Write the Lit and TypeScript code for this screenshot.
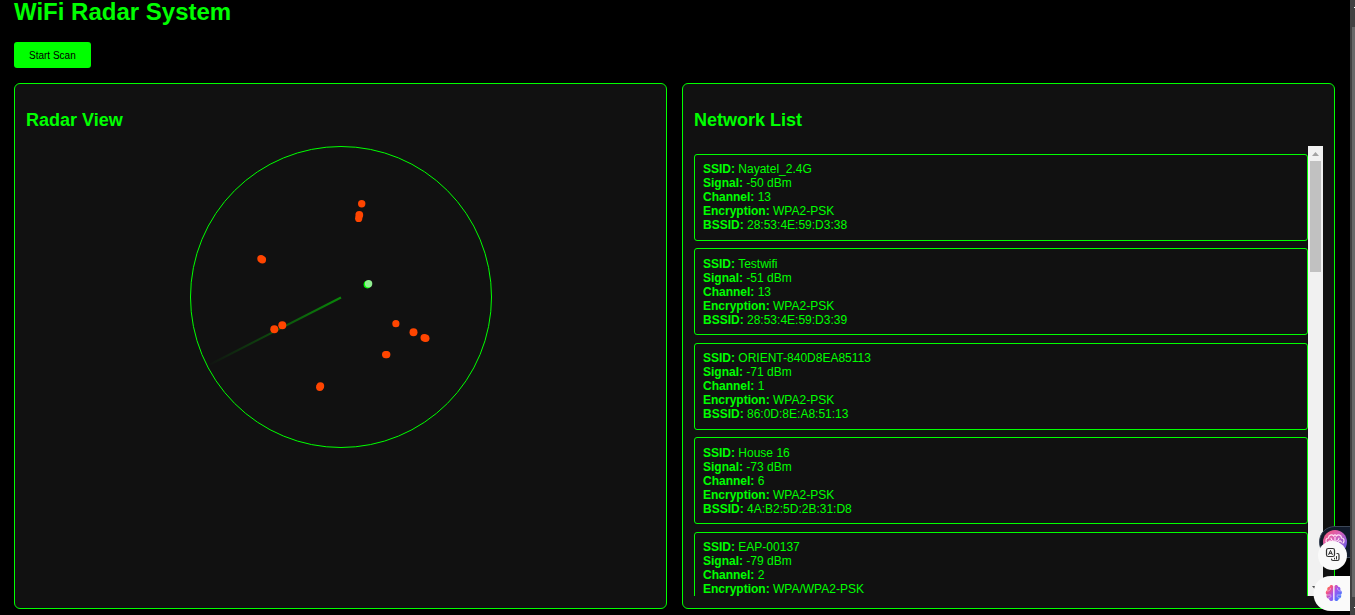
import { LitElement, html, svg, css } from "lit";
import { customElement } from "lit/decorators.js";

interface Network {
  ssid: string;
  signal: number;
  channel: number;
  encryption: string;
  bssid?: string;
}

const NETWORKS: Network[] = [
  { ssid: "Nayatel_2.4G", signal: -50, channel: 13, encryption: "WPA2-PSK", bssid: "28:53:4E:59:D3:38" },
  { ssid: "Testwifi", signal: -51, channel: 13, encryption: "WPA2-PSK", bssid: "28:53:4E:59:D3:39" },
  { ssid: "ORIENT-840D8EA85113", signal: -71, channel: 1, encryption: "WPA2-PSK", bssid: "86:0D:8E:A8:51:13" },
  { ssid: "House 16", signal: -73, channel: 6, encryption: "WPA2-PSK", bssid: "4A:B2:5D:2B:31:D8" },
  { ssid: "EAP-00137", signal: -79, channel: 2, encryption: "WPA/WPA2-PSK" },
];

const WEAK = "#ff4500";

// [x, y, radius, colour] on the 302-unit radar face
const BLIPS: [number, number, number, string][] = [
  [171.7, 57.7, 3.7, WEAK],
  [169.3, 69, 3.9, WEAK],
  [168.7, 72.4, 3.6, WEAK],
  [71, 112.8, 3.7, WEAK],
  [72.4, 113.8, 3.7, WEAK],
  [177.4, 138.6, 3.8, "#00ff00"],
  [178.6, 137.8, 3.7, "#90ee90"],
  [205.9, 177.7, 3.6, WEAK],
  [223.5, 186.2, 4, WEAK],
  [234.2, 191.7, 3.7, WEAK],
  [235.7, 192.2, 3.8, WEAK],
  [195.6, 208.6, 3.6, WEAK],
  [196.8, 208.6, 3.6, WEAK],
  [84.3, 183.2, 4, WEAK],
  [92.3, 179.2, 4, WEAK],
  [130.4, 240, 3.8, WEAK],
  [129.8, 241.3, 3.7, WEAK],
];

@customElement("radar-view")
class RadarView extends LitElement {
  static styles = css`
    :host {
      display: flex;
      justify-content: center;
    }
    .face {
      display: block;
      width: 302px;
      height: 302px;
    }
  `;

  render() {
    return html`
      <svg class="face" viewBox="0 0 302 302" role="img" aria-label="Radar">
        <defs>
          <linearGradient id="sweep" gradientUnits="userSpaceOnUse" x1="151" y1="151.5" x2="17" y2="220">
            <stop offset="0" stop-color="#00ff00" stop-opacity="0.5" />
            <stop offset="1" stop-color="#00ff00" stop-opacity="0" />
          </linearGradient>
        </defs>
        <circle cx="151" cy="151" r="150.5" fill="none" stroke="#00ff00" />
        <line x1="151" y1="151.5" x2="17" y2="220" stroke="url(#sweep)" stroke-width="2" />
        ${BLIPS.map(([x, y, r, c]) => svg`<circle cx=${x} cy=${y} r=${r} fill=${c} />`)}
      </svg>
    `;
  }
}

@customElement("network-list")
class NetworkList extends LitElement {
  static styles = css`
    :host {
      display: flex;
      height: 450px;
    }
    .items {
      flex: 1;
      min-width: 0;
      box-sizing: border-box;
      margin: 0;
      padding: 8px 0 0;
      list-style: none;
      overflow-y: auto;
      scrollbar-width: none;
    }
    .item {
      margin-bottom: 7px;
      padding: 7px 8px 8px;
      border: 1px solid #00ff00;
      border-radius: 3px;
      font-size: 12px;
      line-height: 14px;
    }
    .item:nth-child(even) {
      margin-bottom: 8px;
      padding: 8px 8px 7px;
    }
    .track {
      display: flex;
      flex-direction: column;
      align-items: center;
      width: 15px;
      background: #f1f1f1;
    }
    .arrow {
      display: block;
      width: 15px;
      height: 15px;
    }
    .thumb {
      width: 11px;
      height: 111px;
      margin-bottom: auto;
      background: #c1c1c1;
    }
  `;

  render() {
    return html`
      <ul class="items">
        ${NETWORKS.map(
          (n) => html`<li class="item">
            <div><strong>SSID:</strong> ${n.ssid}</div>
            <div><strong>Signal:</strong> ${n.signal} dBm</div>
            <div><strong>Channel:</strong> ${n.channel}</div>
            <div><strong>Encryption:</strong> ${n.encryption}</div>
            ${n.bssid ? html`<div><strong>BSSID:</strong> ${n.bssid}</div>` : ""}
          </li>`
        )}
      </ul>
      <div class="track" aria-hidden="true">
        <svg class="arrow" viewBox="0 0 15 15"><path d="M4 10h7L7.5 6z" fill="#a3a3a3" /></svg>
        <div class="thumb"></div>
        <svg class="arrow" viewBox="0 0 15 15"><path d="M4 5h7L7.5 9z" fill="#505050" /></svg>
      </div>
    `;
  }
}

const brain = svg`
  <path d="M11.2 3.5C10.2 1.3 7.3 1.5 6.7 3.9C4.5 4 3.400 6 4.1 7.9C1.8 9 1.5 12 3.2 13.5C2.3 16 3.6 18.3 5.9 18.7C6.7 21.8 10.2 22.3 11.2 20.2Z" />
  <path d="M12.8 3.5C13.8 1.3 16.7 1.5 17.3 3.9C19.5 4 20.6 6 19.9 7.9C22.2 9 22.5 12 20.8 13.5C21.7 16 20.4 18.3 18.1 18.7C17.3 21.8 13.8 22.3 12.8 20.2Z" />`;

@customElement("assistant-dock")
class AssistantDock extends LitElement {
  static styles = css`
    :host {
      position: fixed;
      right: 5px;
      bottom: 0;
      width: 37px;
      height: 90px;
      overflow: hidden;
    }
    .art {
      display: block;
      width: 37px;
      height: 90px;
    }
  `;

  render() {
    return html`
      <svg class="art" viewBox="0 0 37 90" aria-hidden="true">
        <defs>
          <linearGradient id="pink" x1="0" y1="0" x2="1" y2="1">
            <stop offset="0" stop-color="#fb5a6e" />
            <stop offset="0.4" stop-color="#d75fb8" />
            <stop offset="1" stop-color="#4f5cf5" />
          </linearGradient>
          <linearGradient id="warm" gradientUnits="userSpaceOnUse" x1="3" y1="3" x2="21" y2="17">
            <stop offset="0" stop-color="#ff9038" />
            <stop offset="0.25" stop-color="#f2508a" />
            <stop offset="0.55" stop-color="#a055f0" />
            <stop offset="1" stop-color="#3d7dff" />
          </linearGradient>
          <clipPath id="disc"><circle cx="22" cy="17" r="12" /></clipPath>
        </defs>
        <path d="M40 1.500H22C13 1.5 6.5 8 6.5 17S13 32.5 22 32.5H40Z" fill="#111a2b" stroke="#3c4757" />
        <circle cx="22" cy="17" r="12" fill="url(#pink)" />
        <g clip-path="url(#disc)" fill="none" stroke="#ffe3f4" stroke-width="1.2" stroke-linecap="round">
          <path d="M14 18c-2-2-1-5 1.5-5c0-3 3.5-4 5-2c1-1.5 2-1.5 3 0c1.500-2 5-1 5 2c2.5 0 3.5 3 1.5 5" />
          <path d="M22 12v6M18 13c0 2 1 2.5 2.5 3M26 13c0 2-1 2.5-2.5 3M15.500 17c1-1.5 2-1.5 3 0M28.5 17c-1-1.5-2-1.5-3 0" />
        </g>
        <circle cx="19.5" cy="30.5" r="14.5" fill="#fafafa" />
        <g fill="none" stroke="#333333" stroke-width="1.2" stroke-linejoin="round" stroke-linecap="round">
          <rect x="13.5" y="23.5" width="8" height="8" rx="1.8" />
          <path d="M15.7 29.6L17.5 25.4L19.3 29.6M16.3 28.3H18.7" stroke-width="1" />
          <path d="M24 28.5h0.500a1.5 1.5 0 0 1 1.5 1.5v4a1.500 1.5 0 0 1-1.5 1.5h-4.5a1.500 1.5 0 0 1-1.5-1.5" />
          <path d="M21.5 33.2V34M23.5 31.5V34" stroke-width="1" />
        </g>
        <path d="M40 51H18C8 51 0.5 58 0.5 68.5S8 86 18 86H40Z" fill="#fafafa" />
        <g transform="translate(11 58.500) scale(0.82)" fill="url(#warm)">${brain}</g>
        <g fill="none" stroke="#fafafa" stroke-width="0.8" stroke-linecap="round" opacity="0.6">
          <path d="M14.500 66c2 0 3-1 3-2.500M13.500 70h4M15.500 73c1.500 0 2.500-1 2.500-2M27.500 66c-2 0-3-1-3-2.500M28.500 70h-4M26.500 73c-1.500 0-2.500-1-2.500-2" />
        </g>
      </svg>
    `;
  }
}

@customElement("app-root")
class AppRoot extends LitElement {
  static styles = css`
    :host {
      display: flex;
      min-height: 100vh;
      background: #000000;
      color: #00ff00;
      font-family: "Liberation Sans", Arial, sans-serif;
    }
    .page {
      flex: 1;
      min-width: 0;
      padding: 0 15px 6px 14px;
    }
    .title {
      margin: 0 0 18px;
      font-size: 24px;
      line-height: 24px;
    }
    .scan {
      display: block;
      margin: 0 0 15px;
      padding: 8px 15px 6px;
      border: 0;
      border-radius: 3px;
      background: #00ff00;
      color: #000000;
      font-family: inherit;
      font-size: 10px;
      line-height: 12px;
      cursor: pointer;
    }
    .panels {
      display: grid;
      grid-template-columns: 1fr 1fr;
      gap: 15px;
    }
    .panel {
      min-width: 0;
      padding: 11px 11px 12px;
      border: 1px solid #00ff00;
      border-radius: 6px;
      background: #111111;
    }
    .heading {
      margin: 15px 0;
      font-size: 18px;
      line-height: 21px;
    }
    .rail {
      display: flex;
      flex-direction: column;
      align-items: flex-end;
      width: 5px;
      background: #424242;
    }
    .grip {
      flex: 1;
      width: 3px;
      margin: 27px 0 18px;
      background: #686868;
    }
    .tick {
      position: absolute;
      right: 0;
      width: 1px;
      height: 1px;
      background: #ffffff;
    }
    .up {
      top: 7px;
    }
    .down {
      bottom: 7px;
    }
  `;

  render() {
    return html`
      <main class="page">
        <h1 class="title">WiFi Radar System</h1>
        <button class="scan" type="button">Start Scan</button>
        <div class="panels">
          <section class="panel">
            <h2 class="heading">Radar View</h2>
            <radar-view></radar-view>
          </section>
          <section class="panel">
            <h2 class="heading">Network List</h2>
            <network-list></network-list>
          </section>
        </div>
      </main>
      <div class="rail" aria-hidden="true">
        <div class="grip"></div>
        <span class="tick up"></span>
        <span class="tick down"></span>
      </div>
      <assistant-dock></assistant-dock>
    `;
  }
}
